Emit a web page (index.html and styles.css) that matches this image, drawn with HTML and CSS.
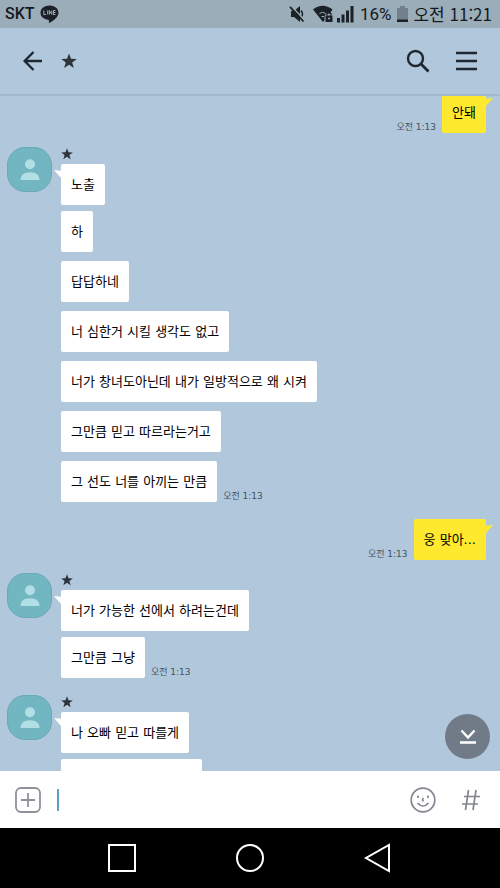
FILE: index.html
```html
<!DOCTYPE html>
<html lang="ko">
<head>
<meta charset="utf-8">
<meta name="viewport" content="width=device-width, initial-scale=1">
<title>★</title>
<link rel="stylesheet" href="styles.css">
</head>
<body>
<svg class="defs" aria-hidden="true">
  <symbol id="star" viewBox="0 0 16 16"><path d="M8 0.4 10 5.7 15.8 5.9 11.2 9.4 12.9 15 8 11.8 3.1 15 4.8 9.4 0.2 5.9 6 5.7Z"/></symbol>
  <symbol id="person" viewBox="0 0 20 21"><circle cx="10" cy="5.3" r="5"/><path d="M0.5 21C0.5 16 4 13.3 10 13.3S19.500 16 19.500 21Z"/></symbol>
</svg>
<div class="screen">
  <div class="status">
    <span class="carrier">SKT</span>
    <svg class="line-badge" width="19" height="19" viewBox="0 0 19 19" aria-hidden="true"><path d="M9.500 0.500C4.500 0.500 0.500 3.600 0.500 7.700c0 3.800 3.300 6.500 7.700 7 .9.200.8.900.6 2.400 0 .9.500 1 1.300.5C13.500 15.500 18.500 12 18.500 7.700 18.500 3.600 14.500 0.500 9.500 0.500Z"/><path d="M3.800 5.500v4h2.200M7.700 5.500v4M9.300 9.500v-4l2.500 4v-4M15.500 5.500h-2v4h2M13.500 7.500h2" fill="none" stroke="#9badb9"/></svg>
    <span class="spacer"></span>
    <svg width="16" height="18" viewBox="0 0 16 18" aria-hidden="true"><path d="M2 6h3L11 1v16L5 12H2Z"/><path d="M12 5.500q3 3.500 0 7" fill="none" stroke="#1b2127" stroke-width="1.500"/><path d="M2.200 1 16 15.600" stroke="#9badb9" stroke-width="1.500"/><path d="M1 1.800 14.500 16.500" stroke="#1b2127" stroke-width="1.800"/></svg>
    <svg class="wifi" width="20" height="18" viewBox="0 0 20 18" aria-hidden="true"><path d="M0 4.500Q9.500-3 19.500 4.500L17 8.200A4 4 0 0 0 11.500 12V15.500L10 17Z"/><path d="M6.500 8.500q3-2.500 6 0M8.500 11.500h2.500" fill="none" stroke="#9badb9"/><path d="M12.500 10.500h7V17h-7Z"/><path d="M14 10.500V9q2-2.500 4 0v1.500" fill="none" stroke="#1b2127" stroke-width="1.300"/><circle cx="16" cy="13.500" r="1" fill="#9badb9"/></svg>
    <svg class="signal" width="17" height="18" viewBox="0 0 17 18" aria-hidden="true"><path d="M0 13h3v4.500H0ZM4.500 9.500h3v8h-3ZM9 5.500h3v12H9ZM13.500 1h3v16.500h-3Z"/></svg>
    <span class="percent">16%</span>
    <svg class="battery" width="11" height="18" viewBox="0 0 11 18" aria-hidden="true"><path d="M3 1h5v2h3v12H0V3h3Z" fill="#72808b"/><path d="M0 14.500h11V17H0Z"/></svg>
    <span class="clock">오전 11:21</span>
  </div>

  <header class="header">
    <button class="icon-button" aria-label="뒤로"><svg width="20" height="20" viewBox="0 0 20 20" fill="none" stroke="#1f2831" stroke-width="2.400"><path d="M19 10H2M10.500 1 1.600 10l8.900 9"/></svg></button>
    <h1 class="title" aria-label="별"><svg width="16" height="16"><use href="#star"/></svg></h1>
    <button class="icon-button" aria-label="검색"><svg width="24" height="24" viewBox="0 0 24 24" fill="none" stroke="#1f2831" stroke-width="2.400"><circle cx="9.500" cy="9.500" r="7.500"/><path d="m14.800 14.800 7.700 7.700" stroke-width="2.800"/></svg></button>
    <button class="icon-button menu" aria-label="메뉴"><svg width="21" height="20" viewBox="0 0 21 20" stroke="#1f2831" stroke-width="2.400"><path d="M0 2h21M0 10h21M0 18h21"/></svg></button>
  </header>

  <div class="chat">
    <main class="messages">
      <div class="own first"><time>오전 1:13</time><p class="bubble">안돼</p></div>

      <section class="group">
        <div class="avatar"><svg width="20" height="21"><use href="#person"/></svg></div>
        <div class="stack">
          <div class="name"><svg width="12" height="12"><use href="#star"/></svg></div>
          <div class="row"><p class="bubble tail">노출</p></div>
          <div class="row"><p class="bubble">하</p></div>
          <div class="row"><p class="bubble">답답하네</p></div>
          <div class="row"><p class="bubble">너 심한거 시킬 생각도 없고</p></div>
          <div class="row"><p class="bubble">너가 창녀도아닌데 내가 일방적으로 왜 시켜</p></div>
          <div class="row"><p class="bubble">그만큼 믿고 따르라는거고</p></div>
          <div class="row"><p class="bubble">그 선도 너를 아끼는 만큼</p><time>오전 1:13</time></div>
        </div>
      </section>

      <div class="own"><time>오전 1:13</time><p class="bubble">웅 맞아...</p></div>

      <section class="group">
        <div class="avatar"><svg width="20" height="21"><use href="#person"/></svg></div>
        <div class="stack">
          <div class="name"><svg width="12" height="12"><use href="#star"/></svg></div>
          <div class="row"><p class="bubble tail">너가 가능한 선에서 하려는건데</p></div>
          <div class="row"><p class="bubble">그만큼 그냥</p><time>오전 1:13</time></div>
        </div>
      </section>

      <section class="group later">
        <div class="avatar"><svg width="20" height="21"><use href="#person"/></svg></div>
        <div class="stack">
          <div class="name"><svg width="12" height="12"><use href="#star"/></svg></div>
          <div class="row"><p class="bubble tail">나 오빠 믿고 따를게</p></div>
          <div class="row"><p class="bubble empty"></p></div>
        </div>
      </section>
    </main>
    <button class="to-bottom" aria-label="맨 아래로"><svg width="18" height="16" viewBox="0 0 18 16" fill="none" stroke="#fff" stroke-width="2.400"><path d="m2.500 1.500 6.500 7 6.500-7M1 13.500h16"/></svg></button>
  </div>

  <form class="composer">
    <button type="button" class="icon-button" aria-label="추가"><svg width="26" height="26" viewBox="0 0 26 26" fill="none" stroke="#8f919b" stroke-width="1.800"><rect x="1" y="1" width="24" height="24" rx="5"/><path d="M13 6v14M6 13h14"/></svg></button>
    <span class="caret"></span>
    <input class="field" type="text" aria-label="메시지">
    <button type="button" class="icon-button" aria-label="이모티콘"><svg width="26" height="26" viewBox="0 0 26 26" fill="none" stroke="#83858f" stroke-width="1.700"><circle cx="13" cy="13" r="11.800"/><path d="M8 8.500v2.500M18 8.500v2.500M13.500 11q-2 2 0 3.200M7.500 16q5.500 6 11 0"/></svg></button>
    <button type="button" class="icon-button hash" aria-label="샵 검색"><svg width="18" height="22" viewBox="0 0 18 22" fill="none" stroke="#83858f" stroke-width="1.700"><path d="M6.500 1 3.500 21M14 1l-3 20M2 7.500h16M0 15h16"/></svg></button>
  </form>

  <nav class="system">
    <button aria-label="최근 앱"><svg width="30" height="30" viewBox="0 0 30 30"><rect x="2" y="2" width="26" height="26"/></svg></button>
    <button aria-label="홈"><svg width="30" height="30" viewBox="0 0 30 30"><circle cx="15" cy="15" r="13"/></svg></button>
    <button aria-label="뒤로"><svg width="30" height="30" viewBox="0 0 30 30"><path d="M26 2v26L3 15Z"/></svg></button>
  </nav>
</div>
</body>
</html>
```
FILE: styles.css
```css
* { box-sizing: border-box; }

body {
  margin: 0;
  font-family: "Noto Sans CJK KR", sans-serif;
  color: #15191d;
}

h1, p { margin: 0; }
svg { display: block; flex: none; }
.defs { width: 0; height: 0; position: absolute; }

button {
  border: 0;
  padding: 0;
  background: none;
}

.screen {
  height: 100vh;
  display: flex;
  flex-direction: column;
  background: #b1c7db;
}

.status {
  flex: none;
  height: 28px;
  display: flex;
  align-items: center;
  padding: 0 8px 0 5px;
  background: #9badb9;
  fill: #1b2127;
  font-size: 17px;
  line-height: 28px;
  white-space: nowrap;
}

.carrier {
  font-family: Roboto, sans-serif;
  font-size: 16px;
  font-weight: 500;
}

.line-badge { margin-left: 5px; }
.spacer { flex: 1; }
.wifi { margin-left: 8px; }
.signal { margin-left: 4px; }
.percent { margin-left: 6px; font-family: Roboto, sans-serif; }
.battery { margin: 0 5px 0 6px; }

.header {
  flex: none;
  height: 68px;
  display: flex;
  align-items: center;
  padding: 0 23px;
  border-bottom: 2px solid #a3b8cb;
}

.title { flex: 1; margin-left: 18px; fill: #30353c; }
.menu { margin-left: 26px; }

.chat {
  flex: 1;
  min-height: 0;
  position: relative;
}

.messages {
  height: 100%;
  overflow: hidden;
  padding: 0 14px 0 7px;
  font-family: "DejaVu Sans", "Noto Sans CJK KR", sans-serif;
}

.own {
  display: flex;
  justify-content: flex-end;
  align-items: flex-end;
  gap: 6px;
  margin: 17px 0 13px;
}

.own.first { margin-top: -4px; margin-bottom: 14px; }

.group { display: flex; gap: 9px; }
.group.later { margin-top: 17px; }

.avatar {
  flex: none;
  width: 45px;
  height: 45px;
  display: flex;
  align-items: center;
  justify-content: center;
  border: 1px solid #69a9b8;
  border-radius: 18px;
  background: #72b6c1;
  fill: #b1dfe5;
}

.name {
  height: 17px;
  padding-top: 1px;
  fill: #2c343d;
}

.row {
  display: flex;
  align-items: flex-end;
  gap: 6px;
  margin-top: 9px;
}

.name + .row { margin-top: 0; }
.name + .row + .row { margin-top: 6px; }

.bubble {
  position: relative;
  height: 41px;
  padding: 0 10px;
  border-radius: 2px;
  background: #fff;
  color: #000;
  font-size: 13px;
  line-height: 41px;
}

.own .bubble { background: #ffe92e; }
.empty { width: 141px; }

.tail::before,
.own .bubble::after {
  content: "";
  position: absolute;
  top: 6px;
  width: 7px;
  height: 8px;
}

.tail::before {
  right: 100%;
  background: #fff;
  clip-path: polygon(0 0, 100% 10%, 100% 100%);
}

.own .bubble::after {
  left: 100%;
  background: #ffe92e;
  clip-path: polygon(0 10%, 100% 0, 0 100%);
}

time {
  font-size: 9px;
  line-height: 11px;
  color: #44525f;
}

.to-bottom {
  position: absolute;
  right: 10px;
  bottom: 12px;
  width: 45px;
  height: 45px;
  display: flex;
  align-items: center;
  justify-content: center;
  border-radius: 50%;
  background: #717b87;
}

.composer {
  flex: none;
  height: 57px;
  display: flex;
  align-items: center;
  padding: 0 20px 0 15px;
  background: #fff;
}

.caret {
  width: 2px;
  height: 22px;
  margin-left: 16px;
  background: #5fa0c0;
}

.field {
  flex: 1;
  min-width: 0;
  height: 40px;
  border: 0;
  outline: 0;
  font: inherit;
  font-size: 14px;
}

.hash { margin-left: 26px; }

.system {
  flex: none;
  height: 60px;
  display: flex;
  align-items: center;
  justify-content: center;
  gap: 98px;
  background: #000;
  fill: none;
  stroke: #fff;
  stroke-width: 2;
}
```
